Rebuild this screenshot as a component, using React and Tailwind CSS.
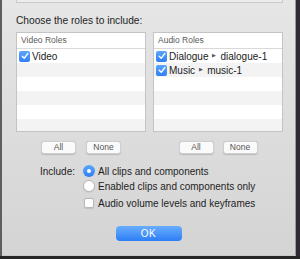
import React from "react";

const font = { fontFamily: '"Liberation Sans", Arial, sans-serif' };

// blue tick box used in the role lists
function Tick() {
  return (
    <div className="w-[11px] h-[11px] rounded-[2px] bg-gradient-to-b from-[#5aa6fb] to-[#2f7ff4] flex items-center justify-center shrink-0">
      <svg width="8" height="8" viewBox="0 0 8 8">
        <path d="M1.2 4.3 L3.2 6.2 L6.8 1.6" fill="none" stroke="white" strokeWidth="1.4" strokeLinecap="round" strokeLinejoin="round" />
      </svg>
    </div>
  );
}

function RoleList({ title, items }) {
  const rows = Array.from({ length: 6 }, (_, i) => items[i]);
  return (
    <div className="w-[130px] h-[100px] bg-white border border-[#c4c4c4] overflow-hidden">
      <div className="h-[16px] border-b border-[#d9d9d9] pl-[4px] flex items-center text-[8.5px] text-[#5a5a5a]">
        {title}
      </div>
      {rows.map((item, i) => (
        <div
          key={i}
          className={i % 2 === 1 ? "h-[14px] bg-[#f3f3f4] flex items-center pl-[2px]" : "h-[14px] bg-white flex items-center pl-[2px]"}
        >
          {item && (
            <>
              <Tick />
              <span className="ml-[2px] text-[10px] text-[#222] flex items-center">
                {item.name}
                {item.sub && (
                  <>
                    <span className="mx-[4px] text-[4.5px] text-[#555]">▶</span>
                    {item.sub}
                  </>
                )}
              </span>
            </>
          )}
        </div>
      ))}
    </div>
  );
}

function SmallButton({ label }) {
  return (
    <div className="w-[35px] h-[13px] rounded-[3px] bg-[#fafafa] border border-[#cfcfcf] shadow-[0_0.5px_1px_rgba(0,0,0,0.15)] flex items-center justify-center text-[8.5px] text-[#555]">
      {label}
    </div>
  );
}

export default function App() {
  return (
    <div className="w-[300px] h-[259px] bg-[#262626] flex flex-col overflow-hidden" style={font}>
      <div className="flex h-[256px]">
        <div className="w-[2px] bg-[#5e5e5e]" />

        {/* DIALOG */}
        <div className="flex-1 bg-gradient-to-b from-[#e6e6e6] to-[#d4d4d4] border-r border-[#9a9a9a] border-b border-b-[#c9c9c9] flex flex-col">
          <div className="ml-[14px] w-[267px] h-[3px] bg-[#ececec] border-x border-b border-[#cacaca]" />

          <div className="ml-[14px] mt-[12px] text-[10.2px] leading-[12px] text-[#1e1e1e]">
            Choose the roles to include:
          </div>

          {/* ROLE LISTS */}
          <div className="ml-[14px] mt-[5px] flex gap-[7px]">
            <div className="flex flex-col items-center">
              <RoleList title="Video Roles" items={[{ name: "Video" }]} />
              <div className="mt-[9px] flex gap-[10px]">
                <SmallButton label="All" />
                <SmallButton label="None" />
              </div>
            </div>
            <div className="flex flex-col items-center">
              <RoleList
                title="Audio Roles"
                items={[
                  { name: "Dialogue", sub: "dialogue-1" },
                  { name: "Music", sub: "music-1" },
                ]}
              />
              <div className="mt-[9px] flex gap-[9px]">
                <SmallButton label="All" />
                <SmallButton label="None" />
              </div>
            </div>
          </div>

          {/* INCLUDE */}
          <div className="mt-[10px] flex text-[10px] text-[#1e1e1e]">
            <div className="w-[73px] h-[14px] flex items-center justify-end">Include:</div>
            <div className="ml-[8px] flex flex-col">
              <div className="h-[14px] flex items-center">
                <div className="w-[12px] h-[12px] rounded-full bg-gradient-to-b from-[#5aa6fb] to-[#2f7ff4] flex items-center justify-center">
                  <div className="w-[4px] h-[4px] rounded-full bg-white" />
                </div>
                <span className="ml-[3px]">All clips and components</span>
              </div>
              <div className="mt-[1px] h-[14px] flex items-center">
                <div className="w-[12px] h-[12px] rounded-full bg-white border border-[#b8b8b8] shadow-[0_0.5px_1px_rgba(0,0,0,0.12)]" />
                <span className="ml-[3px]">Enabled clips and components only</span>
              </div>
              <div className="mt-[3px] h-[14px] flex items-center">
                <div className="ml-[1px] w-[10px] h-[10px] rounded-[2px] bg-white border border-[#b8b8b8] shadow-[0_0.5px_1px_rgba(0,0,0,0.12)]" />
                <span className="ml-[4px]">Audio volume levels and keyframes</span>
              </div>
            </div>
          </div>

          {/* OK */}
          <div className="mt-[16px] flex justify-center">
            <div className="w-[66px] h-[15px] rounded-[4px] bg-gradient-to-b from-[#69adfc] to-[#2c7ef6] flex items-center justify-center text-[10px] text-white tracking-[0.5px]">
              OK
            </div>
          </div>
        </div>

        <div className="w-[4px] bg-[#2f2a34]" />
      </div>
    </div>
  );
}
